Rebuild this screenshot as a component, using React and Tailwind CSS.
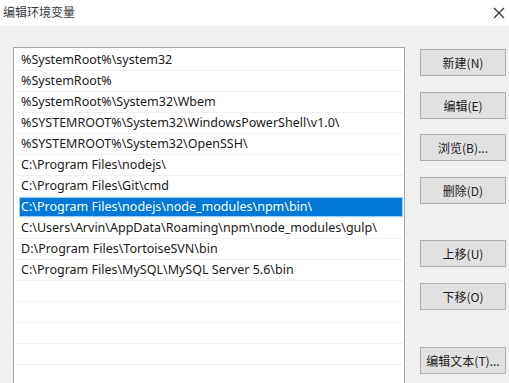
import React from 'react';

const paths = [
  '%SystemRoot%\\system32',
  '%SystemRoot%',
  '%SystemRoot%\\System32\\Wbem',
  '%SYSTEMROOT%\\System32\\WindowsPowerShell\\v1.0\\',
  '%SYSTEMROOT%\\System32\\OpenSSH\\',
  'C:\\Program Files\\nodejs\\',
  'C:\\Program Files\\Git\\cmd',
  'C:\\Program Files\\nodejs\\node_modules\\npm\\bin\\',
  'C:\\Users\\Arvin\\AppData\\Roaming\\npm\\node_modules\\gulp\\',
  'D:\\Program Files\\TortoiseSVN\\bin',
  'C:\\Program Files\\MySQL\\MySQL Server 5.6\\bin',
  '',
  '',
  '',
  '',
  '',
];

const selected = 7;

// label, top margin
const buttons = [
  ['新建(N)', 'mt-0'],
  ['编辑(E)', 'mt-[16px]'],
  ['浏览(B)...', 'mt-[15px]'],
  ['删除(D)', 'mt-[16px]'],
  ['上移(U)', 'mt-[36px]'],
  ['下移(O)', 'mt-[16px]'],
  ['编辑文本(T)...', 'mt-[37px]'],
];

const App = () => {
  return (
    <div className="w-[509px] h-[383px] overflow-hidden bg-[#f0f0f0] text-[#1a1a1a] flex flex-col font-['Noto_Sans','Noto_Sans_CJK_SC',sans-serif]">
      {/* Title bar */}
      <div className="h-[26px] shrink-0 bg-white flex items-center justify-between pl-[3px] pr-[3px]">
        <span className="text-[12px] text-[#3a3a3a] font-['Noto_Sans_CJK_SC',sans-serif] leading-none -mt-[2px]">
          编辑环境变量
        </span>
        <svg width="14" height="14" viewBox="0 0 14 14" className="mt-[-1px]">
          <path d="M2 2 L12 12 M12 2 L2 12" stroke="#333" strokeWidth="1.3" fill="none" />
        </svg>
      </div>

      {/* Body */}
      <div className="flex-1 flex pl-[13px] pt-[21px] min-h-0">
        {/* Path list */}
        <div className="w-[392px] h-[400px] shrink-0 bg-white border border-[#a8a8a8] pt-[2px] pl-[1px] pr-[1px]">
          {paths.map((p, i) => (
            <div key={i} className="h-[21px] border-b border-[#f0f0f0]">
              {i === selected ? (
                <div className="ml-[4px] h-[20px] bg-[#0078d7] border border-[#99d1ff] flex items-center pl-[1px] text-white text-[12.5px] whitespace-nowrap">
                  {p}
                </div>
              ) : (
                <div className="h-[20px] flex items-center pl-[6px] text-[12.5px] whitespace-nowrap">
                  {p}
                </div>
              )}
            </div>
          ))}
        </div>

        {/* Buttons */}
        <div className="flex flex-col ml-[15px] pt-[2px]">
          {buttons.map(([label, mt]) => (
            <button
              key={label}
              className={`${mt} w-[86px] h-[27px] bg-[#e1e1e1] border border-[#adadad] text-[12px] text-[#1a1a1a] flex items-center justify-center font-['Noto_Sans_CJK_SC',sans-serif]`}
            >
              {label}
            </button>
          ))}
        </div>
      </div>
    </div>
  );
};

export default App;
